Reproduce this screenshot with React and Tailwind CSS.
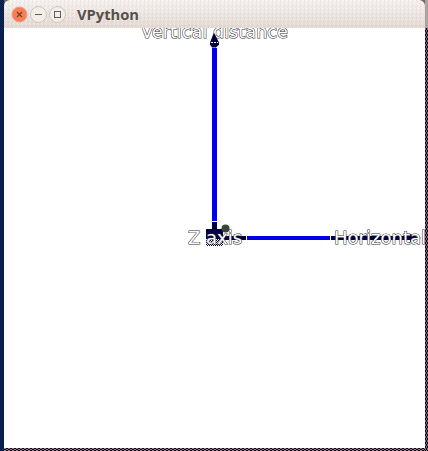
import React from 'react';

function TitleBar() {
  return (
    <header className="relative flex h-7 w-[421px] shrink-0 items-center gap-[3px] rounded-t-md bg-gradient-to-b from-[#f6f1ef] to-[#e0d4cd] pl-[7px]">
      <svg className="absolute inset-0 h-full w-full rounded-t-md">
        <defs>
          <pattern id="grain" width="4" height="4" patternUnits="userSpaceOnUse">
            <path d="M0 0h1v1h-1z" fill="#ffd5cc" />
            <path d="M2 0h1v1h-1zM1 3h1v1h-1z" fill="#ffffff" />
            <path d="M1 1h1v1h-1z" fill="#ccdcff" />
            <path d="M3 3h1v1h-1z" fill="#d5ecd0" />
            <path d="M2 2h1v1h-1z" fill="#ffffd8" />
            <path d="M0 2h1v1h-1z" fill="#e8cce4" />
          </pattern>
        </defs>
        <rect width="421" height="28" fill="url(#grain)" opacity=".5" />
      </svg>
      <svg width="56" height="18" viewBox="0 0 56 18" fill="none" className="relative">
        <circle cx="8.5" cy="9.5" r="7.5" fill="#fa7d54" stroke="#dfa58e" />
        <path d="M6 7l5 5M11 7l-5 5" stroke="#6d4130" strokeWidth="1.2" />
        <circle cx="27.5" cy="9.5" r="8" fill="#f3ede8" stroke="#cdc6c0" />
        <path d="M24 9.5h7" stroke="#67605a" />
        <circle cx="46.5" cy="9.5" r="8" fill="#f3ede8" stroke="#cdc6c0" />
        <rect x="43.5" y="6.5" width="6" height="6" stroke="#67605a" />
      </svg>
      <h1 className="relative pl-[7px] font-['Open_Sans','Noto_Sans',sans-serif] text-[14px] font-bold leading-7 text-[#57504b]">
        <svg width="64" height="28" className="block overflow-visible">
          <text x="0" y="20" textLength="62" lengthAdjust="spacingAndGlyphs" fill="#57504b">VPython</text>
        </svg>
      </h1>
    </header>
  );
}

function Label({ x, y, width, children }) {
  return (
    <text
      x={x}
      y={y}
      textLength={width}
      lengthAdjust="spacingAndGlyphs"
      fill="#fff"
      stroke="#333"
      strokeWidth="1.1"
      paintOrder="stroke"
      className="font-['DejaVu_Sans',sans-serif] text-[18px]"
    >
      {children}
    </text>
  );
}

function Scene() {
  return (
    <svg width="421" height="420" viewBox="4 28 421 420" className="block shrink-0 bg-white">
      <defs>
        <pattern id="weave" width="2" height="2" patternUnits="userSpaceOnUse">
          <path d="M0 0h1v1h-1zM1 1h1v1h-1z" fill="#000040" />
        </pattern>
      </defs>
      <Label x="141" y="38" width="147">Vertical distance</Label>
      <rect x="212" y="48" width="5" height="173" fill="#0000f0" />
      <path d="M213.5 33.5h1l4.5 9v2l-3 3h-4l-2-3v-2z" fill="#000040" />
      <path d="M211 42.5h7" stroke="#fff" strokeDasharray="2 1" />
      <rect x="212" y="222" width="5" height="8" fill="#000040" />
      <rect x="206" y="229" width="17" height="10" fill="#000040" />
      <rect x="206" y="239" width="17" height="7" fill="url(#weave)" />
      <path d="M223 236h23v4h-23z" fill="#000040" />
      <circle cx="225.5" cy="228.5" r="4" fill="#3a443a" />
      <rect x="247" y="236" width="83" height="4" fill="#0000e6" />
      <path d="M331 236h79v-2l11 4l-11 4v-2h-79z" fill="#000040" />
      <Label x="188" y="244" width="54">Z axis</Label>
    </svg>
  );
}

export default function App() {
  return (
    <main className="relative flex h-[451px] w-[428px] overflow-hidden bg-[#aaa4a1]">
      <div className="w-[4px] shrink-0 bg-[repeating-conic-gradient(#022c5c_0_25%,#141440_0_50%)] bg-[length:2px_2px]" />
      <div className="flex w-[421px] shrink-0 flex-col">
        <div className="bg-[#6c6562]"><TitleBar /></div>
        <Scene />
        <div className="h-[3px] shrink-0 bg-[#170014] bg-[repeating-conic-gradient(#170014_0_25%,#8b828a_0_50%)] bg-[length:4px_2px]" />
      </div>
      <div className="mt-7 w-[3px] shrink-0 bg-[#170014] bg-[repeating-conic-gradient(#170014_0_25%,#776b78_0_50%)] bg-[length:2px_4px]" />
      <svg className="absolute left-0 top-0" width="428" height="451">
        <Label x="334" y="244" width="92">Horizontal</Label>
      </svg>
    </main>
  );
}
